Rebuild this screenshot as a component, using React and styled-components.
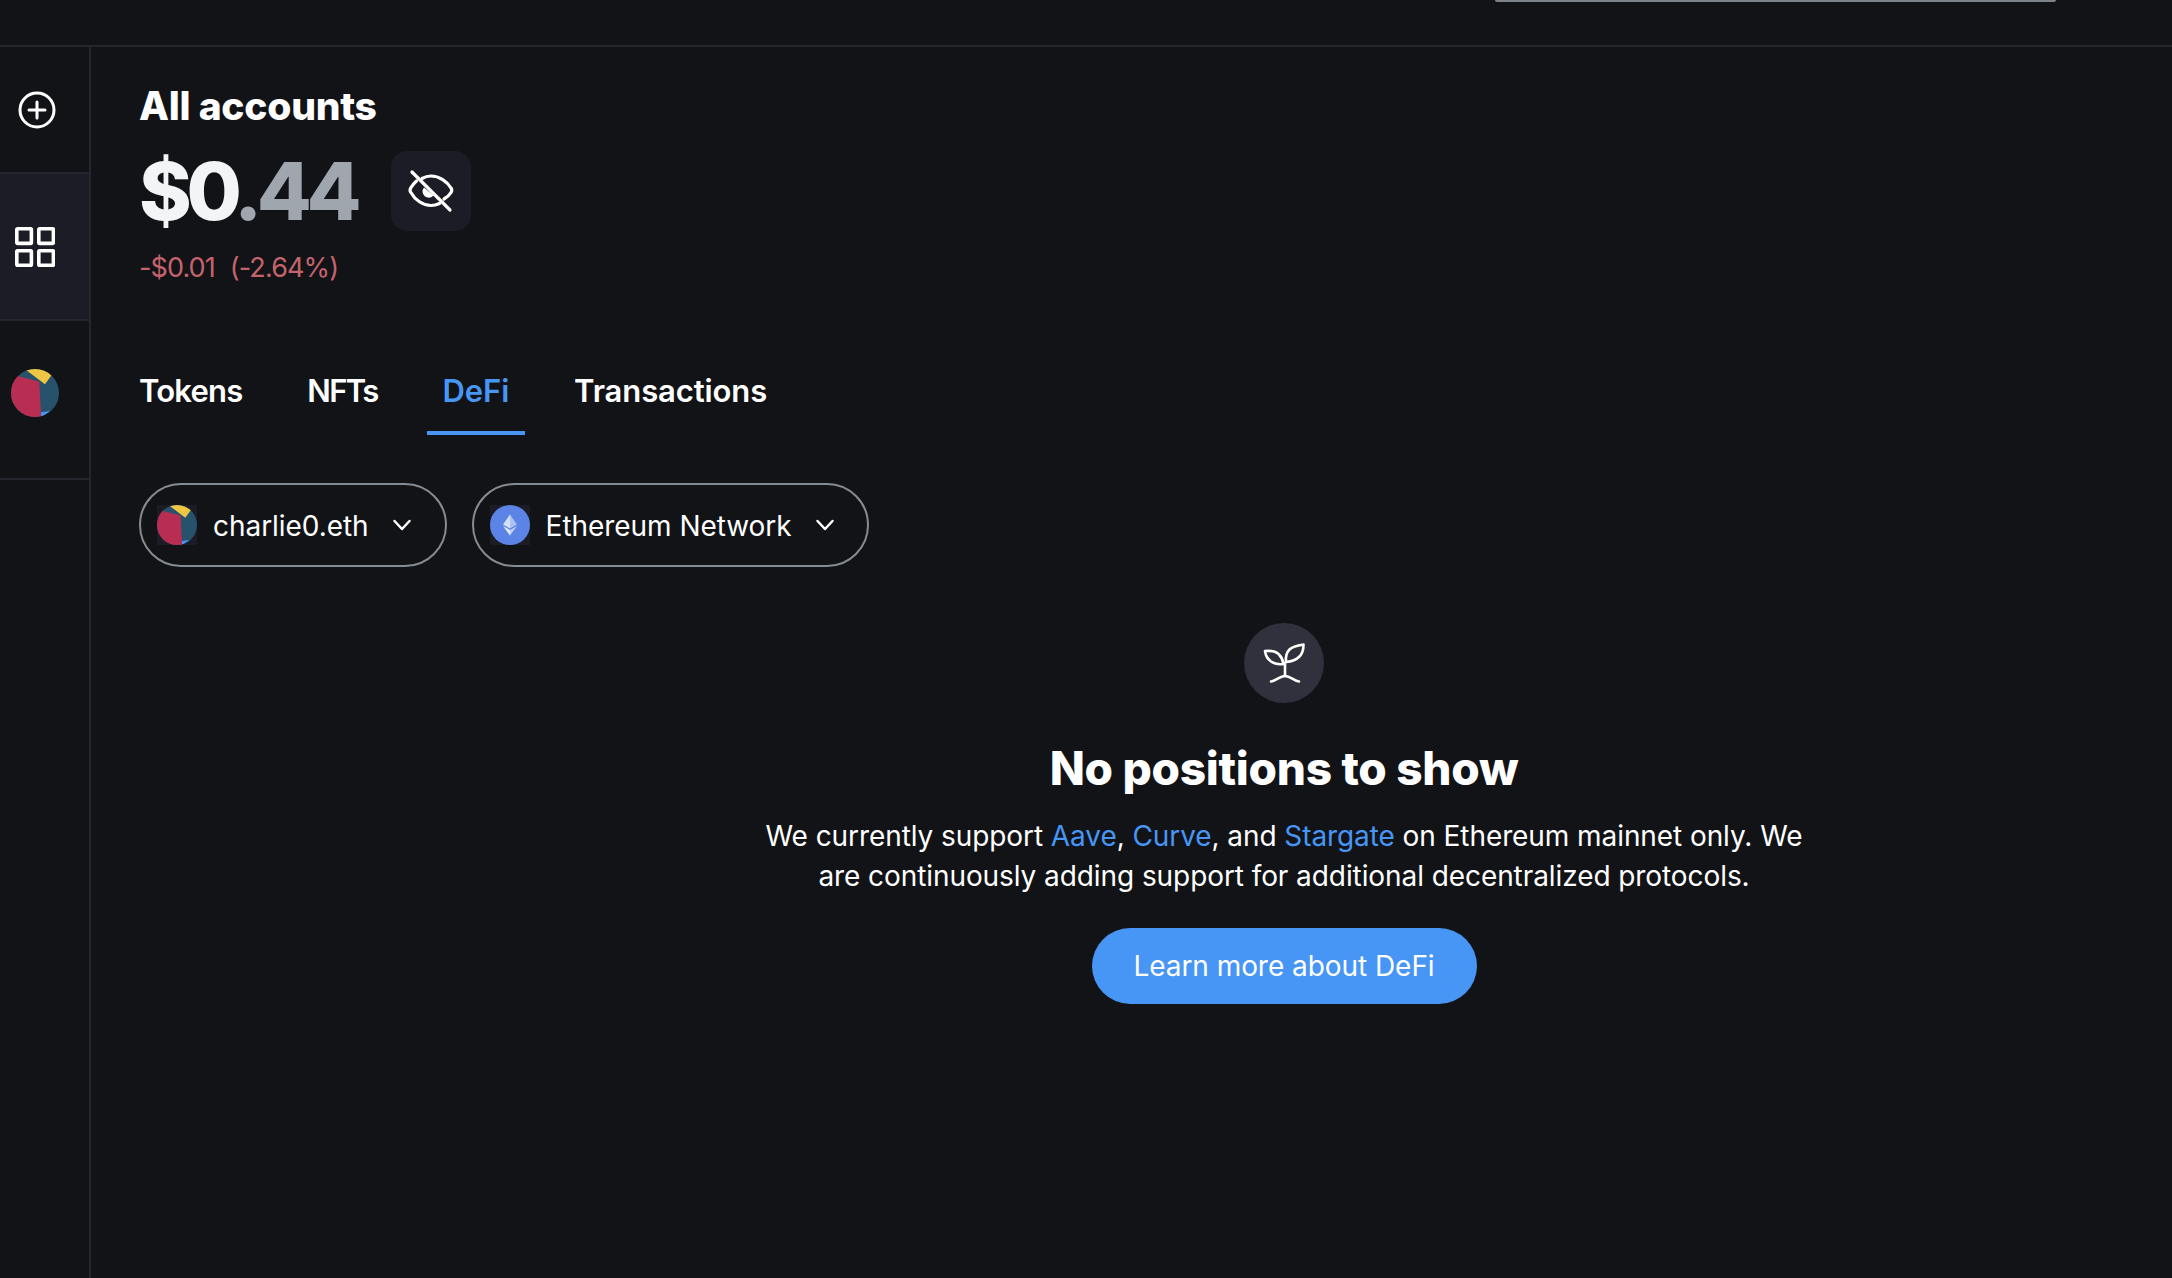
import React from "react";
import styled, { createGlobalStyle } from "styled-components";

const FONT = `"Inter", "Noto Sans", "Liberation Sans", sans-serif`;

const Global = createGlobalStyle`
  html, body { margin: 0; padding: 0; background: #121316; }
  body { font-family: ${FONT}; color: #fff; }
  * { box-sizing: border-box; }
`;

const Page = styled.div`
  width: 2172px;
  height: 1278px;
  display: flex;
  flex-direction: column;
  overflow: hidden;
  background: #121316;
`;

const TopBar = styled.header`
  height: 47px;
  flex: none;
  display: flex;
  justify-content: flex-end;
  align-items: flex-start;
  padding-right: 116px;
  border-bottom: 2px solid #24252d;
`;

const SearchEdge = styled.div`
  width: 561px;
  height: 2px;
  background: #7d838a;
  border-radius: 0 0 6px 6px;
`;

const Body = styled.div`
  flex: 1;
  display: flex;
  min-height: 0;
`;

const Rail = styled.nav`
  width: 91px;
  flex: none;
  display: flex;
  flex-direction: column;
  border-right: 2px solid #24252d;
`;

const RailItem = styled.div`
  height: ${(p) => p.$h}px;
  display: flex;
  align-items: center;
  justify-content: center;
  padding-right: ${(p) => p.$pr || 0}px;
  padding-bottom: ${(p) => p.$pb || 0}px;
  background: ${(p) => (p.$active ? "#1b1c25" : "transparent")};
  border-bottom: 2px solid #24252d;
`;

const Main = styled.main`
  flex: 1;
  min-width: 0;
  padding: 35px 0 0 48px;
`;

const AccountTitle = styled.h1`
  margin: 0;
  font-size: 39px;
  line-height: 48px;
  font-weight: 800;
  letter-spacing: -0.25px;
  color: #fff;
`;

const BalanceRow = styled.div`
  margin-top: 21px;
  display: flex;
  align-items: center;
  height: 80px;
`;

const Balance = styled.div`
  width: 252px;
  font-size: 80px;
  line-height: 80px;
  font-weight: 800;
  letter-spacing: -5.4px;
  color: #f2f4f6;
`;

const Cents = styled.span`
  color: #9fa6ae;
`;

const EyeButton = styled.button`
  width: 80px;
  height: 80px;
  padding: 0;
  border: 0;
  border-radius: 16px;
  background: #1b1c25;
  display: flex;
  align-items: center;
  justify-content: center;
`;

const Delta = styled.div`
  margin-top: 19px;
  display: flex;
  gap: 15px;
  font-size: 27px;
  line-height: 36px;
  letter-spacing: -0.9px;
  color: #c4636c;
`;

const Tabs = styled.div`
  margin: 85px 0 0 -16px;
  display: flex;
  gap: 32.8px;
`;

const Tab = styled.div`
  padding: 0 16px 20px;
  font-size: 31px;
  line-height: 40px;
  font-weight: 600;
  letter-spacing: ${(p) => p.$ls}px;
  color: ${(p) => (p.$active ? "#4796f5" : "#fff")};
  border-bottom: 4px solid ${(p) => (p.$active ? "#4796f5" : "transparent")};
`;

const Filters = styled.div`
  margin-top: 48px;
  display: flex;
  gap: 25px;
`;

const Pill = styled.button`
  height: 84px;
  padding: 2px ${(p) => p.$pr}px 0 16px;
  display: flex;
  align-items: center;
  background: transparent;
  border: 2px solid #858b92;
  border-radius: 42px;
  font-family: ${FONT};
  font-size: 28px;
  letter-spacing: -0.05px;
  color: #fff;
`;

const PillAvatar = styled.span`
  width: 40px;
  height: 40px;
  margin: -2px 16px 0 0;
  flex: none;
  display: block;
  background: #1b1c25;
`;

const PillChevron = styled.svg`
  width: 20px;
  height: 12px;
  margin: -2px 0 0 23px;
  flex: none;
`;

const Empty = styled.section`
  width: 1200px;
  margin: 56px 0 0 545px;
  display: flex;
  flex-direction: column;
  align-items: center;
  text-align: center;
`;

const SproutBadge = styled.div`
  width: 80px;
  height: 80px;
  border-radius: 50%;
  background: #30313d;
`;

const EmptyTitle = styled.h2`
  margin: 37px 0 0;
  font-size: 46px;
  line-height: 56px;
  font-weight: 800;
  letter-spacing: -0.3px;
  color: #fff;
`;

const EmptyText = styled.p`
  margin: 20px 0 0;
  font-size: 28px;
  line-height: 40px;
  letter-spacing: -0.08px;
  color: #fff;
`;

const TextLink = styled.span`
  color: #4796f5;
`;

const LearnButton = styled.button`
  margin-top: 32px;
  width: 385px;
  height: 76px;
  border: 0;
  border-radius: 38px;
  background: #4796f5;
  color: #fff;
  font-family: ${FONT};
  font-size: 28px;
  letter-spacing: -0.05px;
`;

const Blockie = ({ size }) => (
  <svg width={size} height={size} viewBox="0 0 48 48" style={{ display: "block", borderRadius: "50%" }}>
    <rect width="48" height="48" fill="#26536b" />
    <polygon points="15,1 34,15.3 40.7,6 36,-2 15,-2" fill="#eec643" />
    <polygon points="5,6.5 28.3,12.7 30.3,50 -2,50 -2,6.5" fill="#b82e52" />
    <polygon points="30,43.3 39,42 30,48.5" fill="#4796f5" />
  </svg>
);

const EthMark = () => (
  <svg width="40" height="40" viewBox="0 0 40 40" style={{ display: "block" }}>
    <circle cx="20" cy="20" r="20" fill="#5b84e6" />
    <polygon points="20,9.500 20,23.500 13,19.500" fill="#fff" opacity="0.75" />
    <polygon points="20,9.500 20,23.500 27,19.500" fill="#fff" opacity="0.5" />
    <polygon points="20,25 20,30.500 13,21" fill="#fff" opacity="0.85" />
    <polygon points="20,25 20,30.500 27,21" fill="#fff" opacity="0.6" />
  </svg>
);

const Chevron = () => (
  <PillChevron viewBox="0 0 20 12" fill="none" stroke="#fff" strokeWidth="2.5" strokeLinecap="round" strokeLinejoin="round">
    <path d="M2.500 2l7.500 8 7.500-8" />
  </PillChevron>
);

export default function App() {
  return (
    <Page>
      <Global />
      <TopBar>
        <SearchEdge />
      </TopBar>
      <Body>
        <Rail>
          <RailItem $h={127} $pr={15}>
            <svg width="40" height="40" viewBox="0 0 40 40" fill="none" stroke="#fff" strokeWidth="3" strokeLinecap="round">
              <circle cx="20" cy="20" r="17" />
              <path d="M20 12v16M12 20h16" />
            </svg>
          </RailItem>
          <RailItem $h={147} $active $pr={19}>
            <svg width="40" height="40" viewBox="0 0 40 40" fill="none" stroke="#fff" strokeWidth="3.600" strokeLinejoin="round">
              <rect x="1.800" y="1.800" width="14.600" height="14.600" rx="0.8" />
              <rect x="23.800" y="1.800" width="14.600" height="14.600" rx="0.8" />
              <rect x="1.800" y="23.800" width="14.600" height="14.600" rx="0.8" />
              <rect x="23.800" y="23.800" width="14.600" height="14.600" rx="0.8" />
            </svg>
          </RailItem>
          <RailItem $h={159} $pr={19} $pb={13}>
            <Blockie size={48} />
          </RailItem>
        </Rail>
        <Main>
          <AccountTitle>All accounts</AccountTitle>
          <BalanceRow>
            <Balance>
              $0<Cents>.44</Cents>
            </Balance>
            <EyeButton aria-label="Hide balance">
              <svg width="80" height="80" viewBox="0 0 80 80" fill="none" stroke="#fff" strokeWidth="3.200" strokeLinecap="round" strokeLinejoin="round">
                <path d="M31 27.500C34 25.800 37 25 40 25c8.500 0 16 5.500 20 12 1 1.500 1 3 0 4.500-1.500 2.500-4 4.800-7 6.500" />
                <path d="M25.500 30c-2.300 2-4.300 4.300-5.800 7-.8 1.400-.8 3 0 4.200C24 49 32 54.500 40 54.500c3 0 5.800-.7 8.500-2" />
                <path d="M33 36.500a6 6 0 0 0 9.500 8" fill="#fff" stroke="none" />
                <path d="M21 21l38 38" />
              </svg>
            </EyeButton>
          </BalanceRow>
          <Delta>
            <span>-$0.01</span>
            <span>(-2.64%)</span>
          </Delta>
          <Tabs>
            <Tab $ls={-0.8}>Tokens</Tab>
            <Tab $ls={-1.6}>NFTs</Tab>
            <Tab $active $ls={-0.1}>DeFi</Tab>
            <Tab $ls={-0.1}>Transactions</Tab>
          </Tabs>
          <Filters>
            <Pill $pr={33}>
              <PillAvatar>
                <Blockie size={40} />
              </PillAvatar>
              charlie0.eth
              <Chevron />
            </Pill>
            <Pill $pr={32}>
              <PillAvatar>
                <EthMark />
              </PillAvatar>
              Ethereum Network
              <Chevron />
            </Pill>
          </Filters>
          <Empty>
            <SproutBadge>
              <svg width="80" height="80" viewBox="0 0 80 80" fill="none" stroke="#fff" strokeWidth="2.600" strokeLinecap="round" strokeLinejoin="round">
                <path d="M21 28c6-.5 11 0 14 3.500 3 3 4 6 4.500 9.500-4.500.5-9 0-12.500-2.500C23.500 36 21.500 32 21 28z" />
                <path d="M59.500 21.500c-6 1-11 2-14 5-3.500 3.500-4 8-3.500 12.500 5-.5 10-2 13.500-5.500 3-3 4-7.500 4-12z" />
                <path d="M41 40v13" />
                <path d="M27 58.500c5-1 9-5.500 14-5.500s9 4.500 14 5.500" />
              </svg>
            </SproutBadge>
            <EmptyTitle>No positions to show</EmptyTitle>
            <EmptyText>
              We currently support <TextLink>Aave</TextLink>, <TextLink>Curve</TextLink>, and{" "}
              <TextLink>Stargate</TextLink> on Ethereum mainnet only. We
              <br />
              are continuously adding support for additional decentralized protocols.
            </EmptyText>
            <LearnButton>Learn more about DeFi</LearnButton>
          </Empty>
        </Main>
      </Body>
    </Page>
  );
}
